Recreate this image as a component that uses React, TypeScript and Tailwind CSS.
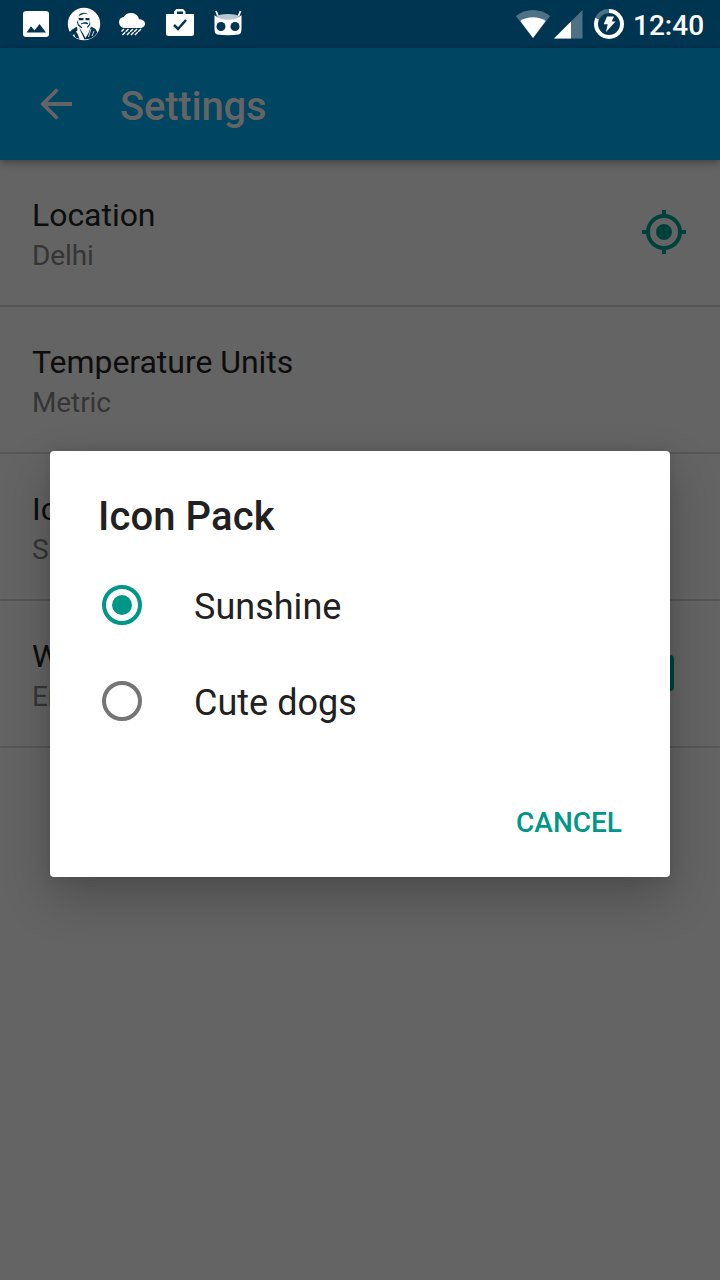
import type { ReactNode } from 'react';

function StatusBar() {
  return (
    <header className="flex h-12 items-center justify-between bg-[#003552] text-white">
      <svg width="260" height="48" viewBox="0 0 260 48" fill="#fff">
        <path fillRule="evenodd" d="M26 11h20a3 3 0 0 1 3 3v20a3 3 0 0 1-3 3H26a3 3 0 0 1-3-3V14a3 3 0 0 1 3-3ZM26.500 32.500h19.500L39.500 24l-5 6.500-3.500-4.200Z" />
        <circle cx="84" cy="24" r="16.200" />
        <g fill="#003552">
          <path d="M78.500 16c1-2.500 3.500-3.500 6-3.300l4 1.500-4.500-.4-3 1.200Z" />
          <path d="M78.500 18h5v2.300h-4.500ZM85.500 18h4v2.300h-4Z" />
          <path d="M80.800 23.400l3-1.200h3l1.500 1.400-1 1-1.700-.8h-3l-1.300.8Z" />
          <path d="m78 20 .4 4 3.600 3-.3 1.500-3.700-3-1-3ZM90 20l-.7 4-2.300 3 .8 1 2.500-3.500Z" />
          <path d="M77 26.500 71.500 30l-2 2.500 3 3.500 1.500-2 1.500 3.500 4 1.500-1.800-5-1.700-2.500 1.500-1ZM91 26.500l4.500 2.500 2 3.500-2.500 3-4 3-6.500 1-4-8.500-1.500-4 4 6.500 2.500 4.500 3-5Z" />
        </g>
        <path d="m91 29-2.500 8M94 31l-2 5" fill="none" stroke="#fff" strokeWidth=".8" />
        <path d="M125 28a6 6 0 0 1-6-5.500 5.500 5.500 0 0 1 5-5.400C125 14 128.200 13 131 13c4 0 7.500 2.500 8 6.300 3 0 6 1.700 6 4.400 0 2.500-2.400 4.300-5 4.300Z" />
        <path d="m124 29-2.500 2.500M128.500 29l-6 6M133 29l-6 6M137 29l-6 6M141 29l-6 6" fill="none" stroke="#fff" strokeWidth="1.500" strokeDasharray="4 .7" />
        <path fillRule="evenodd" d="M166 14h8v-2.500l2.500-2.500h6.500l2.500 2.500V14h8.500v19.500a2.500 2.500 0 0 1-2.500 2.500h-23a2.500 2.500 0 0 1-2.500-2.500Zm11 0h6v-2.500h-6Z" />
        <path d="m174 25 4 4 8-9" fill="none" stroke="#003552" strokeWidth="2.500" />
        <path d="m216 11 2 5M240.500 11l-2 5" fill="none" stroke="#fff" strokeWidth="1.800" />
        <path d="M214.500 15c5 5 22 5 27 0v12c0 5-.5 7-3 7.500-7 1-14 1-21 0-2.500-.5-3-2.500-3-7.500Z" />
        <ellipse cx="228" cy="16.800" rx="11" ry="2.900" fill="#b8c8d1" />
        <circle cx="221" cy="26.500" r="4.500" fill="#003552" />
        <circle cx="235" cy="26.500" r="4.500" fill="#003552" />
      </svg>
      <div className="flex h-12 items-center">
        <svg width="118" height="48" viewBox="510 0 118 48">
          <path d="M515.800 16c10-8 24.400-8 34.400 0L533 38Z" fill="#4d7286" />
          <path d="M520.300 21c7-5 18.400-5 25.400 0L533 38Z" fill="#fff" />
          <path d="M554 38.500 582.500 10v28.500Z" fill="#4d7286" />
          <path d="M554 38.500 571 21.500v17Z" fill="#fff" />
          <circle cx="609" cy="24" r="13" fill="none" stroke="#fff" strokeWidth="4" />
          <path d="M597.200 18.500A13 13 0 0 1 609 11" fill="none" stroke="#003552" strokeWidth="4.400" />
          <path d="M597.200 18.500A13 13 0 0 1 609 11" fill="none" stroke="#4d7286" strokeWidth="4" />
          <path d="M607 16.500h7l-2.300 5h3.800L606 32l1.700-7.800h-4Z" fill="#fff" />
        </svg>
        <span className="w-[92px] pl-[5px] pt-[3px] text-[28px] leading-8 font-medium">12:40</span>
      </div>
    </header>
  );
}

function Preference({ title, summary, children }: { title: string; summary: string; children?: ReactNode }) {
  return (
    <li className="flex h-[147px] items-start justify-between border-b-2 border-[#565656] pl-8 pr-8">
      <div className="pt-[35px]">
        <p className="text-[32px] leading-10 tracking-[-0.04px] text-[#0d0d0d]">{title}</p>
        <p className="pt-px text-[28px] leading-10 tracking-[-0.1px] text-[#353535]">{summary}</p>
      </div>
      {children}
    </li>
  );
}

function Choice({ label, checked = false }: { label: string; checked?: boolean }) {
  return (
    <label className="flex h-24 items-center">
      <input type="radio" name="pack" defaultChecked={checked} className="sr-only" />
      <svg width="40" height="40" viewBox="0 0 40 40" className={checked ? 'text-[#009688]' : 'text-[#757575]'}>
        <circle cx="20" cy="20" r="18" fill="none" stroke="currentColor" strokeWidth="4" />
        {checked && <circle cx="20" cy="20" r="10" fill="currentColor" />}
      </svg>
      <span className="pl-[52px] pt-1 text-[36px] leading-[42px] tracking-[0.02px]">{label}</span>
    </label>
  );
}

export default function App() {
  return (
    <div className="relative h-[1280px] w-[720px] overflow-hidden bg-[#646464] font-['Roboto',sans-serif]">
      <StatusBar />
      <nav className="relative flex h-28 items-center bg-[#004562] text-[#646464] shadow-[0_2px_8px_rgba(0,0,0,0.4)]">
        <svg width="32" height="32" viewBox="0 0 32 32" className="ml-10" fill="none" stroke="currentColor" strokeWidth="4">
          <path d="M32 16H4M17.400 1.500 2.900 16l14.500 14.500" strokeWidth="3.800" />
        </svg>
        <h1 className="pl-12 pt-[6px] text-[40px] leading-12 font-medium tracking-[-0.2px]">Settings</h1>
      </nav>
      <ul>
        <Preference title="Location" summary="Delhi">
          <svg width="48" height="48" viewBox="0 0 48 48" className="mt-12" fill="none" stroke="#00423b" strokeWidth="4">
            <circle cx="24" cy="24" r="16" />
            <path d="M24 2v6M24 40v6M2 24h6M40 24h6" />
            <circle cx="24" cy="24" r="8" fill="#00423b" stroke="none" />
          </svg>
        </Preference>
        <Preference title="Temperature Units" summary="Metric" />
        <Preference title="Icon Pack" summary="Sunshine" />
        <Preference title="Weather Notifications" summary="Enabled">
          <span className="mt-[54px] mr-[14px] h-9 w-9 rounded bg-[#00423b]" />
        </Preference>
      </ul>
      <section role="dialog" className="absolute top-[451px] left-[50px] flex h-[426px] w-[620px] flex-col rounded bg-white px-12 text-[#212121] shadow-[0_20px_48px_rgba(0,0,0,0.24),0_0_12px_rgba(0,0,0,0.1)]">
        <h2 className="pt-[42px] text-[40px] leading-12 font-medium tracking-[0.1px]">Icon Pack</h2>
        <div className="mt-4 pl-1">
          <Choice label="Sunshine" checked />
          <Choice label="Cute dogs" />
        </div>
        <button className="mt-[58px] self-end text-[28px] leading-8 font-medium text-[#009688]">CANCEL</button>
      </section>
    </div>
  );
}
